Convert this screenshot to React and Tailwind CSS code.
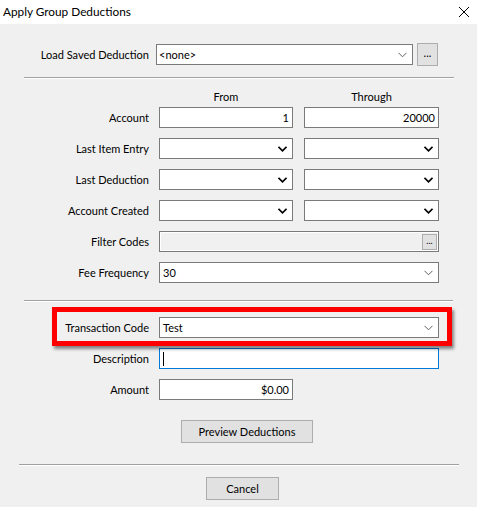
import React from 'react';

const FONT = { fontFamily: 'Lato, "Noto Sans", sans-serif' };

const Chevron = ({ dark }) => (
  <svg width="9" height="6" viewBox="0 0 9 6" className="shrink-0">
    <polyline
      points="0.5,0.8 4.5,4.8 8.5,0.8"
      fill="none"
      stroke={dark ? '#000000' : '#606060'}
      strokeWidth={dark ? '1.6' : '1'}
    />
  </svg>
);

const Combo = ({ width, value, dark, className = '' }) => (
  <div
    className={`h-[21px] bg-white border border-[#7a7a7a] flex items-center justify-between pl-[2px] pr-[5px] ${className}`}
    style={{ width }}
  >
    <span className="leading-none">{value}</span>
    <Chevron dark={dark} />
  </div>
);

const TextBox = ({ width, value, right, focused }) => (
  <div
    className={`h-[21px] bg-white border flex items-center px-[3px] ${
      focused ? 'border-[#0078d7]' : 'border-[#7a7a7a]'
    } ${right ? 'justify-end' : 'justify-start'}`}
    style={{ width }}
  >
    {focused ? <span className="w-px h-[14px] bg-black" /> : <span className="leading-none">{value}</span>}
  </div>
);

const Label = ({ children }) => (
  <div className="w-[150px] text-right leading-none pr-px">{children}</div>
);

const Separator = ({ className = '' }) => (
  <div className={`h-[2px] border-t border-[#a0a0a0] border-b border-b-white ${className}`} />
);

const Button = ({ children, className = '' }) => (
  <div
    className={`h-[23px] bg-[#e1e1e1] border border-[#adadad] flex items-center justify-center leading-none ${className}`}
  >
    {children}
  </div>
);

export default function App() {
  const pairRows = ['Last Item Entry', 'Last Deduction', 'Account Created'];

  return (
    <div className="w-[477px] h-[507px] bg-[#f0f0f0] text-[11px] text-[#000] overflow-hidden" style={FONT}>
      <div className="h-[24px] bg-white flex items-center justify-between pl-[3px] pr-[7px]">
        <span className="text-[11.8px] leading-none">Apply Group Deductions</span>
        <svg width="12" height="12" viewBox="0 0 12 12">
          <path d="M1 1 L11 11 M11 1 L1 11" stroke="#000" strokeWidth="1" />
        </svg>
      </div>

      <div className="pt-[20px]">
        <div className="flex items-center h-[21px]">
          <Label>Load Saved Deduction</Label>
          <Combo width="257px" value="<none>" className="ml-[6px]" />
          <Button className="ml-[4px] w-[21px] h-[21px] pb-[4px]">...</Button>
        </div>

        <Separator className="mt-[12px] ml-[24px] w-[430px]" />

        <div className="flex mt-[10px] h-[14px] items-center leading-none">
          <div className="w-[159px]" />
          <div className="w-[134px] text-center">From</div>
          <div className="w-[11px]" />
          <div className="w-[135px] text-center">Through</div>
        </div>

        <div className="flex items-center h-[21px] mt-[4px]">
          <Label>Account</Label>
          <div className="ml-[9px] flex gap-[11px]">
            <TextBox width="134px" value="1" right />
            <TextBox width="135px" value="20000" right />
          </div>
        </div>

        {pairRows.map((label) => (
          <div key={label} className="flex items-center h-[21px] mt-[10px]">
            <Label>{label}</Label>
            <div className="ml-[9px] flex gap-[11px]">
              <Combo width="134px" dark />
              <Combo width="135px" dark />
            </div>
          </div>
        ))}

        <div className="flex items-center h-[21px] mt-[10px]">
          <Label>Filter Codes</Label>
          <div className="ml-[9px] w-[280px] h-[21px] border border-[#7a7a7a] bg-[#f0f0f0] shadow-[inset_0_0_0_1px_#ffffff] flex items-center justify-end pr-[1px]">
            <div className="w-[15px] h-[16px] bg-[#e1e1e1] border border-[#adadad] flex items-center justify-center text-[9px] leading-none pb-[3px]">
              ...
            </div>
          </div>
        </div>

        <div className="flex items-center h-[21px] mt-[10px]">
          <Label>Fee Frequency</Label>
          <Combo width="280px" value="30" className="ml-[9px] pl-[3px]" />
        </div>

        <Separator className="mt-[17px] ml-[24px] w-[429px]" />

        <div className="relative flex items-center h-[21px] mt-[15px]">
          <Label>Transaction Code</Label>
          <Combo width="280px" value="Test" className="ml-[9px] pl-[3px]" />
          <div className="absolute left-[52px] top-[-10px] w-[400px] h-[39px] border-[5px] border-[#ff0000] shadow-[2px_3px_3px_rgba(0,0,0,0.45)] pointer-events-none" />
        </div>

        <div className="flex items-center h-[21px] mt-[10px]">
          <Label>Description</Label>
          <div className="ml-[9px]">
            <TextBox width="280px" focused />
          </div>
        </div>

        <div className="flex items-center h-[21px] mt-[10px]">
          <Label>Amount</Label>
          <div className="ml-[9px]">
            <TextBox width="134px" value="$0.00" right />
          </div>
        </div>

        <div className="flex justify-start mt-[20px]">
          <Button className="ml-[181px] w-[132px]">Preview Deductions</Button>
        </div>

        <Separator className="mt-[21px] ml-[19px] w-[440px]" />

        <div className="flex mt-[11px]">
          <Button className="ml-[206px] w-[73px]">Cancel</Button>
        </div>
      </div>
    </div>
  );
}
